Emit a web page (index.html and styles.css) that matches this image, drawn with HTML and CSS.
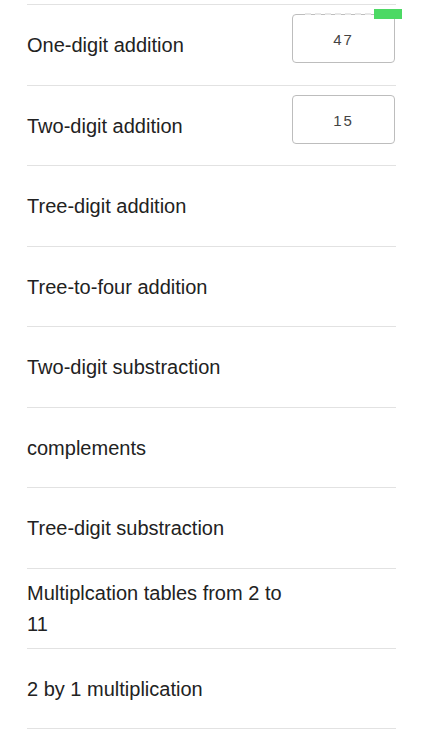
FILE: index.html
```html
<!DOCTYPE html>
<html lang="en">
<head>
  <title>Exercises</title>
  <link rel="stylesheet" href="styles.css">
</head>
<body>

  <div id="listDiv">
    <div class="row">
      <span class="label">One-digit addition</span>
      <div class="answerBox">47
        <span class="dashTop"></span>
        <span class="greenFlag"></span>
      </div>
    </div>
    <div class="row">
      <span class="label">Two-digit addition</span>
      <div class="answerBox">15</div>
    </div>
    <div class="row">
      <span class="label">Tree-digit addition</span>
    </div>
    <div class="row">
      <span class="label">Tree-to-four addition</span>
    </div>
    <div class="row">
      <span class="label">Two-digit substraction</span>
    </div>
    <div class="row">
      <span class="label">complements</span>
    </div>
    <div class="row">
      <span class="label">Tree-digit substraction</span>
    </div>
    <div class="row">
      <span class="label wrap">Multiplcation tables from 2 to 11</span>
    </div>
    <div class="row last">
      <span class="label">2 by 1 multiplication</span>
    </div>
  </div>

</body>
</html>
```

FILE: styles.css
```css
body {
  margin: 0;
  background-color: white;
  color: #222;
  font-family: "Liberation Sans", Arial, sans-serif;
}

#listDiv {
  margin: 4px 27px 0 27px;
}

.row {
  box-sizing: border-box;
  height: 80.5px;
  border-top: 1px solid #e2e2e2;
  display: flex;
  align-items: center;
  justify-content: space-between;
}

.row.last {
  border-bottom: 1px solid #e2e2e2;
}

.label {
  font-size: 20px;
  line-height: 31px;
  padding-top: 2px;
}

.wrap {
  width: 265px;
}

.answerBox {
  position: relative;
  box-sizing: border-box;
  align-self: flex-start;
  margin-top: 9px;
  margin-right: 1px;
  width: 103px;
  height: 49px;
  border: 1px solid #bdbdbd;
  border-radius: 4px;
  display: flex;
  align-items: center;
  justify-content: center;
  padding-top: 2px;
  font-family: "Liberation Sans", Arial, sans-serif;
  font-size: 15px;
  letter-spacing: 2px;
  color: #444;
}

.dashTop {
  position: absolute;
  top: -2px;
  left: 12px;
  width: 66px;
  border-top: 2px dashed #e6e6e6;
}

.greenFlag {
  position: absolute;
  top: -6px;
  right: -8px;
  width: 28px;
  height: 10px;
  background-color: #4cd964;
}
```
